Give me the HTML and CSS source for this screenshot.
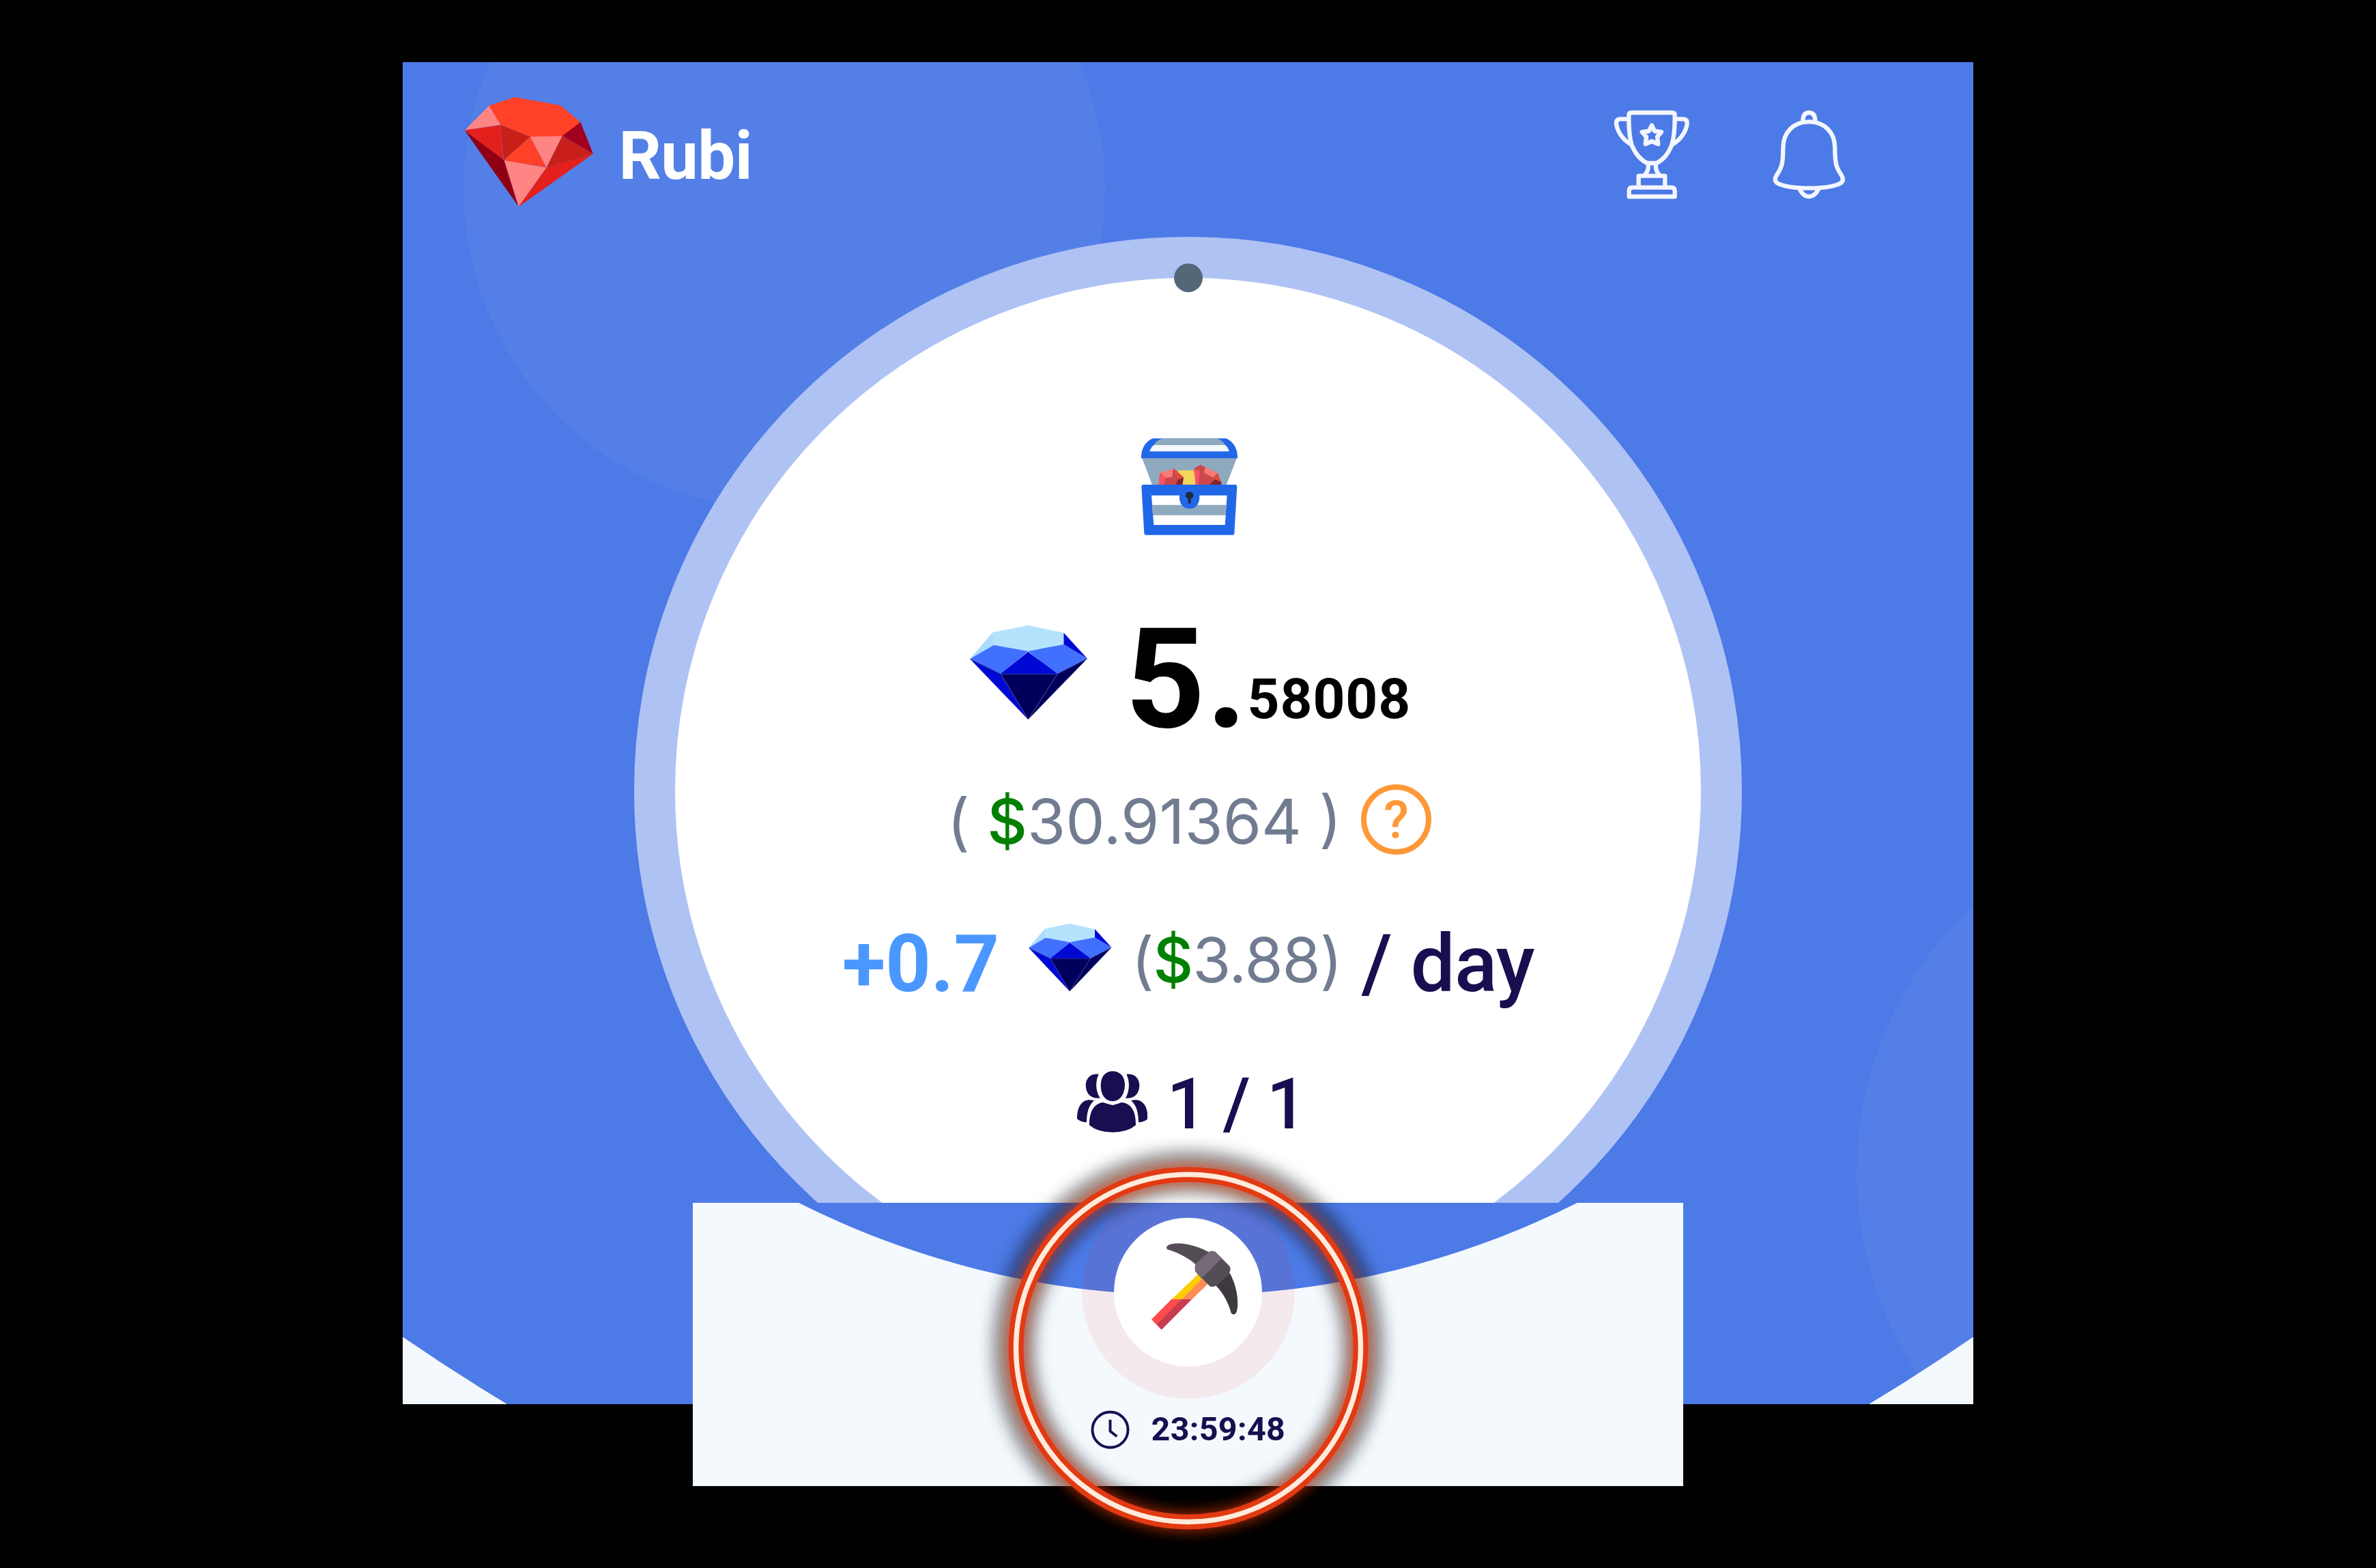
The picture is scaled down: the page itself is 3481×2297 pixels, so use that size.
FILE: index.html
```html
<!DOCTYPE html>
<html lang="en">
<head>
<meta charset="utf-8">
<title>Rubi</title>
<link rel="stylesheet" href="styles.css">
</head>
<body>
<svg class="defs" width="0" height="0" aria-hidden="true">
  <symbol id="diamond" viewBox="90 108 373 414" preserveAspectRatio="none">
    <path fill="#a9dcff" d="M163 139L166 196 90 256Z"/>
    <path fill="#b5e3fd" d="M163 139L275 108 388 141V193L275 224 163 197Z"/>
    <path fill="#0009d4" d="M388 141L463 254 388 193Z"/>
    <path fill="#4170ff" d="M90 256L166 195 275 222 188 323Z"/>
    <path fill="#4170ff" d="M463 254L388 192 275 222 368 323Z"/>
    <path fill="#0009d4" d="M275 224L368 321H188Z"/>
    <path fill="#0009d4" d="M90 256L188 321 275 522Z"/>
    <path fill="#00005c" d="M188 321H368L275 522Z"/>
    <path fill="#00005c" d="M463 254L368 321 275 522Z"/>
    <path fill="none" stroke="#4a4a98" stroke-width="2" d="M275 522L188 323H368L275 522M368 322L463 254M188 322L90 256"/>
  </symbol>
</svg>

<main class="panel">
  <svg class="backdrop" viewBox="0 0 2301 1966" aria-hidden="true">
    <circle class="base" cx="1150.5" cy="251" r="1984"/>
    <circle class="bubble" cx="559" cy="186" r="470"/>
    <circle class="bubble" cx="2663" cy="1627" r="533"/>
    <path class="corner" d="M0 1867.5Q75 1919 153 1966H0Z"/>
    <path class="corner" d="M2301 1867.5Q2226 1919 2148 1966H2301Z"/>
  </svg>

  <header class="topbar">
    <svg class="logo" viewBox="274 186 508 482" preserveAspectRatio="none">
      <path fill="#ff4127" d="M370 224L472 187 652 223 732 297 660 359 533 362 415 308Z"/>
      <path fill="#ff8484" d="M370 224L415 308 274 332Z"/>
      <path fill="#e4201c" d="M274 332L415 310 426 465Z"/>
      <path fill="#c81f19" d="M415 309L533 361 428 465Z"/>
      <path fill="#ff4127" d="M533 361L597 496 428 465Z"/>
      <path fill="#ff8484" d="M533 361L660 358 597 496Z"/>
      <path fill="#c81f19" d="M660 358L782 436 597 497Z"/>
      <path fill="#a0001d" d="M732 297L782 436 660 357Z"/>
      <path fill="#8f0015" d="M274 334L430 465 486 667Z"/>
      <path fill="#ff8484" d="M430 465L597 497 487 668Z"/>
      <path fill="#e4201c" d="M782 436L597 497 487 668Z"/>
    </svg>
    <span class="brand">Rubi</span>
    <svg class="tool trophy" viewBox="130 122 341 394">
      <path d="M200 150V145Q200 134 212 134H390Q402 134 402 145V160C402 215 398 250 387 280C370 322 345 345 322 356H282C255 345 232 320 214 280C204 250 200 215 200 160Z"/>
      <path d="M199 162H160Q143 164 145 185C152 225 180 258 212 275M402 162H441Q458 164 456 185C449 225 421 258 390 275"/>
      <path d="M284 358Q290 388 268 410M320 358Q314 388 336 410"/>
      <path d="M243 455V412H359V455M201 503V478Q201 463 214 463H388Q402 463 402 478V503Z"/>
      <path d="M301 190L313 215 343 219 325 240 329 272 301 260 273 272 277 240 258 219 289 215Z"/>
    </svg>
    <svg class="tool bell" viewBox="830 122 327 394">
      <path d="M993 174C925 174 879 220 879 290C879 360 873 375 850 410Q838 430 852 443C880 458 930 466 993 466C1056 466 1106 458 1134 443Q1148 430 1136 410C1113 375 1107 360 1107 290C1107 220 1061 174 993 174Z"/>
      <path d="M966 170C966 145 976 134 993 134C1010 134 1020 145 1020 170M951 468C960 488 975 503 993 503C1011 503 1026 488 1036 468"/>
    </svg>
  </header>

  <section class="dial">
    <i class="knob"></i>
    <svg class="chest" viewBox="155 127 423 425" preserveAspectRatio="none">
      <path fill="#8fa9bf" d="M158 212H576L528 335H204Z"/>
      <path fill="#2168e8" d="M155 215V203Q160 148 205 128H528Q573 148 578 203V215Z"/>
      <path fill="#8fa9bf" d="M250 128H485Q512 135 524 157H210Q222 135 250 128Z"/>
      <path fill="#f4f9fe" d="M210 157H524Q538 168 541 185H192Q196 168 210 157Z"/>
      <path fill="none" stroke="#2f66c8" stroke-width="2" d="M194 187V215M540 187V215"/>
      <path fill="#f3d55b" d="M318 268H392V336H318Z"/>
      <path fill="#cb484b" d="M236 285L297 260 341 298 334 334H232Z"/>
      <path fill="#ff5166" d="M240 278L264 300 252 334H230Z"/>
      <path fill="#f77b72" d="M240 278L297 261 290 298 262 300Z"/>
      <path fill="#e5493b" d="M297 260L341 298 318 310Z"/>
      <path fill="#7f2730" d="M341 300L336 335H305L318 308Z"/>
      <path fill="#cb484b" d="M386 260L415 244 490 280 506 318V335H396Z"/>
      <path fill="#ff5166" d="M386 260L412 272 406 334H396Z"/>
      <path fill="#f77b72" d="M437 254L490 280 472 300 430 278Z"/>
      <path fill="#e5493b" d="M490 280L507 322 470 300Z"/>
      <path fill="#7f2730" d="M455 333L478 308 507 320V335Z"/>
      <path fill="#2168e8" d="M160 331H573L576 340 564 546 560 552H174L168 546 156 340Z"/>
      <path fill="#fff" d="M200 378H532L523 508H210Z"/>
      <path fill="#8fa9bf" d="M203 420H529L526 465H206Z"/>
      <path fill="#2168e8" d="M323 370H411V392Q406 436 367 437Q328 436 323 392Z"/>
      <path fill="#1d2b3f" d="M367 363A15 15 0 0 1 374 392L372 412Q367 418 362 412L360 392A15 15 0 0 1 367 363Z"/>
    </svg>

    <div class="row balance">
      <svg class="gem-lg"><use href="#diamond"/></svg>
      <span class="whole">5.</span><span class="fraction">58008</span>
    </div>

    <div class="row worth">
      <span class="worth-text">( <b>$</b>30.91364 )</span>
      <span class="help">?</span>
    </div>

    <div class="row rate">
      <span class="gain">+0.7</span>
      <svg class="gem-sm"><use href="#diamond"/></svg>
      <span class="rate-text">(<b>$</b>3.88)</span>
      <span class="per-day">/ day</span>
    </div>

    <div class="row team">
      <svg class="people" viewBox="113 87 311 270">
        <path d="M208 101C170 97 151 120 151 152C153 185 172 210 214 206C192 170 194 130 208 101ZM330 101C368 97 387 120 387 152C385 185 366 210 326 206C346 170 344 130 330 101Z"/>
        <path d="M188 217C150 205 113 225 113 297Q130 312 155 312C156 270 163 238 188 217ZM350 217C388 205 424 225 424 297Q407 312 383 312C382 270 375 238 350 217Z"/>
        <path d="M269 88C303 88 323 112 323 150C321 192 301 219 269 220C237 219 217 192 217 150C217 112 237 88 269 88Z"/>
        <path d="M228 225Q248 232 269 237Q290 232 308 225C350 228 372 262 371 325Q335 356 269 356Q203 356 167 325C166 262 190 228 228 225Z"/>
      </svg>
      <span class="team-count">1 / 1</span>
    </div>
  </section>
</main>

<section class="mine">
  <svg class="mine-bg" viewBox="0 0 1451 415" aria-hidden="true"><circle cx="725.5" cy="-1131" r="1266.6"/></svg>
  <div class="halo">
    <div class="pick">
      <svg class="pickaxe" viewBox="654 420 311 333" preserveAspectRatio="none">
        <path fill="#554d56" d="M708 436C712 424 735 420 765 422C800 426 835 440 862 456L812 502C785 475 745 455 712 445Q707 441 708 436Z"/>
        <path fill="#3e383f" d="M935 535C955 575 965 620 963 660C962 680 958 690 952 693Q943 694 940 688C930 650 912 612 885 583Z"/>
        <path fill="#ffcd00" d="M822 538L838 555 762 636H726Z"/>
        <path fill="#ff8c55" d="M836 555L858 575 798 636H762Z"/>
        <path fill="#ff4b4b" d="M726 635H764L672 733 654 712Z"/>
        <path fill="#c83c50" d="M762 635H799L690 752 672 732Z"/>
        <path fill="#554d56" d="M862 453Q872 448 882 453L934 508Q939 516 936 526L932 540 884 584Q874 589 864 586L812 530Q808 518 812 500Z"/>
        <path fill="#756b78" d="M862 453Q872 448 882 453L906 478 833 556 812 530Q808 518 812 500Z"/>
      </svg>
    </div>
  </div>
  <div class="timer">
    <svg class="clock" viewBox="0 0 58 58"><circle cx="29" cy="29" r="26.5"/><path d="M29 14V31L39 39"/></svg>
    <span class="time">23:59:48</span>
  </div>
  <svg class="neon" viewBox="-320 -320 640 640" aria-hidden="true">
    <defs>
      <filter id="soft" x="-20%" y="-20%" width="140%" height="140%"><feGaussianBlur stdDeviation="11"/></filter>
      <filter id="glow" x="-20%" y="-20%" width="140%" height="140%"><feGaussianBlur stdDeviation="10"/></filter>
    </defs>
    <ellipse rx="256" ry="258" stroke="#000" stroke-opacity=".4" stroke-width="64" filter="url(#soft)"/>
    <ellipse rx="253" ry="254.5" stroke="#e8380f" stroke-opacity=".72" stroke-width="26" filter="url(#glow)"/>
    <ellipse rx="252.5" ry="254.5" stroke="#e23a12" stroke-width="22"/>
    <ellipse rx="252.5" ry="254.5" stroke="#ffeadb" stroke-width="7.5"/>
  </svg>
</section>
</body>
</html>
```
FILE: styles.css
```css
* { box-sizing: border-box; }

html, body { margin: 0; background: #000; }

body {
  width: 3481px;
  height: 2297px;
  overflow: hidden;
  padding-top: 91px;
  font-family: Roboto, "Liberation Sans", sans-serif;
}

svg { display: block; flex: none; }
.defs { position: absolute; }

.panel {
  position: relative;
  width: 2301px;
  height: 1966px;
  margin-left: 590px;
  overflow: hidden;
  background: #4c7ae6;
}

.backdrop { position: absolute; inset: 0; width: 100%; height: 100%; }
.base { fill: #4c7ae6; }
.bubble { fill: rgba(255, 255, 255, .042); }
.corner { fill: #f4f9fe; }

.topbar {
  position: relative;
  display: flex;
  align-items: flex-start;
  height: 256px;
  padding: 51px 0 0 91.4px;
}
.logo { width: 188px; height: 160.7px; }
.brand {
  width: 190px;
  margin: 27px 0 0 37px;
  color: #fff;
  font-size: 97.6px;
  font-weight: 700;
  letter-spacing: -.6px;
  line-height: 120px;
  white-space: nowrap;
}
.tool {
  fill: none;
  stroke: #f3f6ff;
  stroke-width: 19;
  stroke-linejoin: round;
  margin-top: 18.7px;
  height: 131.3px;
}
.trophy { width: 113.7px; margin-left: 1266.6px; }
.bell { width: 109px; margin-left: 119.8px; }

.dial {
  position: relative;
  display: flex;
  flex-direction: column;
  width: 1623px;
  height: 1623px;
  margin: 0 auto;
  padding-top: 235px;
  border: 60px solid #afc2f4;
  border-radius: 50%;
  background: #fff;
}
.knob {
  position: absolute;
  top: -21px;
  left: 731px;
  width: 42px;
  height: 42px;
  border-radius: 50%;
  background: #546778;
}
.chest { width: 141px; height: 141.7px; margin: 0 0 0 682.5px; }

.row { display: flex; align-items: flex-start; white-space: nowrap; }
.row b { color: #008000; font-weight: 500; }

.balance {
  height: 220px;
  margin-top: 112px;
  padding-left: 432px;
  color: #000;
  font-weight: 700;
}
.gem-lg { width: 172px; height: 138px; margin-top: 20.5px; }
.whole {
  width: 179px;
  margin: -10px 0 0 55.5px;
  font-size: 204px;
  letter-spacing: 2px;
  line-height: 220px;
}
.fraction {
  margin: 78px 0 0 0;
  font-size: 82px;
  letter-spacing: .9px;
  line-height: 100px;
}

.worth {
  height: 160px;
  margin-top: 7px;
  padding-left: 398.5px;
  color: #717c91;
  font: 400 91px/120px Inter, sans-serif;
}
.worth-text { width: 606.5px; margin-top: 20px; }
.help {
  width: 103px;
  height: 103px;
  margin-top: 26.5px;
  border: 8px solid #ff9838;
  border-radius: 50%;
  color: #ff9838;
  font: 500 76px/88px Roboto, sans-serif;
  text-align: center;
}

.rate {
  height: 200px;
  margin-top: 30px;
  padding-left: 245px;
  font-size: 116px;
  font-weight: 500;
  line-height: 140px;
  color: #170f50;
}
.gain { width: 273px; margin-top: 29px; color: #4a97ff; font-weight: 700; }
.gem-sm { width: 121.5px; height: 99.3px; margin-top: 40.5px; }
.rate-text {
  width: 337px;
  margin: 33px 0 0 29px;
  color: #717c91;
  font: 400 91px/120px Inter, sans-serif;
  letter-spacing: -1.1px;
}
.per-day { margin-top: 29px; letter-spacing: -1px; }

.team {
  height: 120px;
  margin-top: 56px;
  padding-left: 588.7px;
  color: #170f50;
}
.people { width: 103.7px; height: 90px; margin-top: 0; fill: #170f50; }
.team-count {
  margin: -11px 0 0 28px;
  font-size: 103px;
  font-weight: 500;
  letter-spacing: -.9px;
  line-height: 120px;
}

.mine {
  position: relative;
  display: flex;
  flex-direction: column;
  align-items: center;
  width: 1451px;
  height: 415px;
  margin: -295px 0 0 1015px;
  background: #f4f9fe;
}
.mine-bg { position: absolute; inset: 0; width: 100%; height: 100%; overflow: hidden; fill: #4c7ae6; }
.halo {
  position: relative;
  display: flex;
  flex: none;
  align-items: center;
  justify-content: center;
  width: 312px;
  height: 312px;
  margin-top: -25px;
  border-radius: 50%;
  background: rgba(250, 25, 10, .07);
  clip-path: inset(25px 0 0 0);
}
.pick {
  width: 217px;
  height: 218px;
  padding: 37px 0 0 55px;
  border-radius: 50%;
  background: #fff;
}
.pickaxe { width: 127px; height: 127.4px; }
.timer {
  position: relative;
  display: flex;
  align-items: center;
  width: 286px;
  height: 60px;
  margin-top: 15px;
  color: #170f50;
}
.clock { width: 57px; height: 57px; fill: none; stroke: #170f50; stroke-width: 4; }
.time {
  margin-left: 32px;
  font-size: 48.5px;
  font-weight: 700;
  letter-spacing: .3px;
  line-height: 60px;
}
.neon {
  position: absolute;
  left: 405.5px;
  top: -107.4px;
  width: 640px;
  height: 640px;
  overflow: visible;
  fill: none;
}
```
